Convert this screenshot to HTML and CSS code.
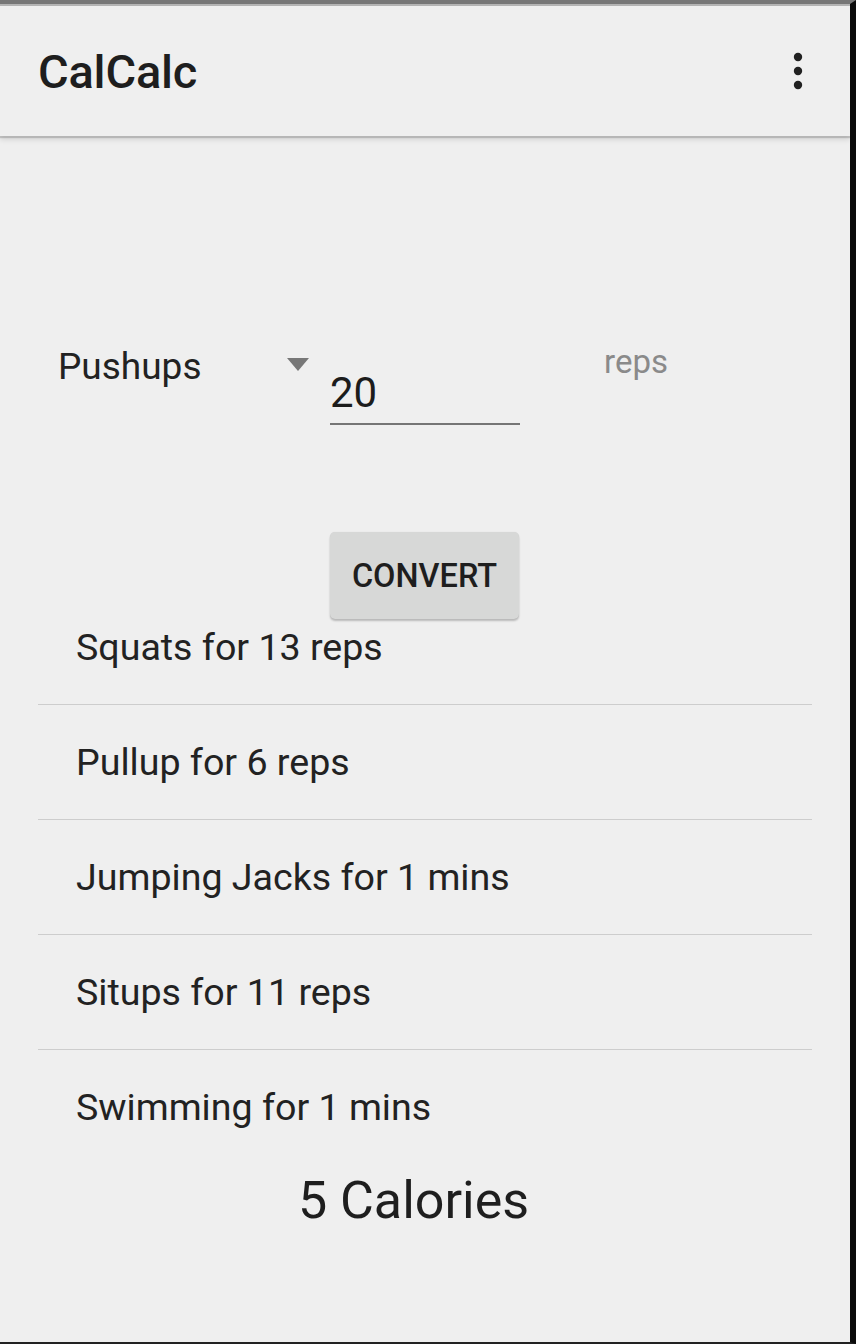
FILE: index.html
```html
<!DOCTYPE html>
<html>
<head>
<meta charset="utf-8">
<link rel="stylesheet" href="styles.css">
</head>
<body>
<div class="device">
  <div class="status-edge"></div>
  <header class="appbar">
    <h1 class="title">CalCalc</h1>
    <svg class="menu" width="12" height="40" viewBox="0 0 12 40">
      <circle cx="6" cy="6" r="4.2" fill="#212121"/>
      <circle cx="6" cy="20" r="4.2" fill="#212121"/>
      <circle cx="6" cy="34" r="4.2" fill="#212121"/>
    </svg>
  </header>
  <main class="content">
    <div class="input-row">
      <div class="spinner">
        <span class="spinner-text">Pushups</span>
        <span class="spinner-arrow"></span>
      </div>
      <div class="edit">20</div>
      <div class="unit">reps</div>
    </div>
    <div class="button-row">
      <button class="convert">CONVERT</button>
    </div>
    <ul class="results">
      <li class="result">Squats for 13 reps</li>
      <li class="result">Pullup for 6 reps</li>
      <li class="result">Jumping Jacks for 1 mins</li>
      <li class="result">Situps for 11 reps</li>
      <li class="result">Swimming for 1 mins</li>
    </ul>
    <div class="total">5 Calories</div>
  </main>
</div>
</body>
</html>
```
FILE: styles.css
```css
html, body {
  margin: 0;
  padding: 0;
  background: #111;
}
body {
  font-family: Roboto, "Noto Sans", "Liberation Sans", sans-serif;
  color: #212121;
}
.device {
  box-sizing: border-box;
  width: 856px;
  height: 1344px;
  background: #efefef;
  border-top: 4px solid #777777;
  border-right: 6px solid #0b0b0b;
  border-bottom: 2px solid #222222;
  overflow: hidden;
  display: flex;
  flex-direction: column;
}
.status-edge {
  height: 2px;
  background: #b4b4b4;
}
.appbar {
  height: 130px;
  display: flex;
  align-items: center;
  justify-content: space-between;
  padding: 0 46px 0 38px;
  background: #efefef;
  box-shadow: 0 2px 1px rgba(0,0,0,0.16), 0 4px 5px rgba(0,0,0,0.10);
  position: relative;
  z-index: 1;
}
.title {
  margin: 0;
  font-size: 47px;
  font-weight: 500;
  letter-spacing: -0.2px;
  color: #1e1e1e;
}
.menu {
  display: block;
  margin-top: 0;
}
.content {
  flex: 1;
  display: flex;
  flex-direction: column;
}
.input-row {
  display: flex;
  align-items: flex-start;
  padding-left: 58px;
  margin-top: 206px;
}
.spinner {
  width: 251px;
  display: flex;
  justify-content: space-between;
  align-items: flex-start;
  margin-top: 3px;
}
.spinner-text {
  font-size: 37px;
  line-height: 44px;
  color: #222;
}
.spinner-arrow {
  width: 0;
  height: 0;
  margin-top: 13px;
  border-left: 11px solid transparent;
  border-right: 11px solid transparent;
  border-top: 13px solid #777777;
}
.edit {
  box-sizing: border-box;
  width: 190px;
  margin-left: 21px;
  margin-top: 26px;
  font-size: 42px;
  line-height: 50px;
  padding-bottom: 5px;
  border-bottom: 2px solid #757575;
  color: #1c1c1c;
}
.unit {
  margin-left: 84px;
  font-size: 33px;
  line-height: 40px;
  color: #8a8a8a;
}
.button-row {
  display: flex;
  padding-left: 330px;
  margin-top: 107px;
  position: relative;
  z-index: 1;
}
.convert {
  width: 189px;
  height: 87px;
  border: none;
  border-radius: 5px;
  background: #d7d8d7;
  box-shadow: 0 2px 2px rgba(0,0,0,0.22), 0 0 1px rgba(0,0,0,0.12);
  font-family: Roboto, "Noto Sans", "Liberation Sans", sans-serif;
  font-size: 32.5px;
  font-weight: 500;
  color: #1e1e1e;
  padding: 0;
}
.results {
  list-style: none;
  margin: -29px 38px 0 38px;
  padding: 0;
}
.result {
  height: 114px;
  display: flex;
  align-items: center;
  padding-left: 38px;
  font-size: 37.6px;
  color: #222;
  border-top: 1px solid #cdcdcd;
}
.result:first-child {
  border-top: none;
}
.total {
  margin-top: 7px;
  padding-right: 23px;
  text-align: center;
  font-size: 52px;
  line-height: 60px;
  color: #1e1e1e;
}
```
